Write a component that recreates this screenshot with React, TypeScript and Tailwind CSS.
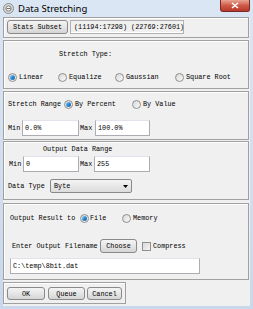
import React from "react";

const Radio = ({ on }: { on?: boolean }) => (
  <span className="relative inline-flex h-[9px] w-[9px] shrink-0 items-center justify-center rounded-full border border-[#8e8f8f] bg-gradient-to-br from-[#d8d8d8] to-[#fafafa]">
    {on && <span className="h-[5px] w-[5px] rounded-full bg-gradient-to-br from-[#8fd1f7] via-[#2a8ad4] to-[#1a5a9a]" />}
  </span>
);

const Input = ({ w, h = 16, text }: { w: number; h?: number; text: string }) => (
  <div
    className="flex shrink-0 items-center border border-[#abadb3] border-t-[#e2e3ea] bg-white pl-[2px] text-black"
    style={{ width: w, height: h }}
  >
    {text}
  </div>
);

const Btn = ({ w, h, text }: { w: number; h: number; text: string }) => (
  <div
    className="flex shrink-0 items-center justify-center rounded-[3px] border border-[#8a8a8a] bg-gradient-to-b from-[#f4f4f4] via-[#e6e6e6] to-[#d4d4d4] text-black"
    style={{ width: w, height: h }}
  >
    {text}
  </div>
);

const Box = ({ children, h, w = 246, mt }: { children: React.ReactNode; h: number; w?: number; mt: number }) => (
  <div
    className="flex shrink-0 flex-col border border-[#a0a0a0] shadow-[inset_1px_1px_0_#ffffff]"
    style={{ height: h, width: w, marginTop: mt }}
  >
    {children}
  </div>
);

export default function App() {
  return (
    <div className="flex h-[309px] w-[253px] flex-col bg-gradient-to-b from-[#dbe6f4] to-[#c9d8ec]">
      <div className="relative flex h-[17px] shrink-0 items-center">
        <svg className="ml-[3px]" width="11" height="11" viewBox="0 0 11 11">
          <circle cx="5.5" cy="5.5" r="5" fill="#d8d8d8" stroke="#7a7a7a" strokeWidth="0.8" />
          <circle cx="5.5" cy="5.5" r="2.6" fill="#f2f2f2" stroke="#6a6a6a" strokeWidth="0.8" />
          <path d="M3.5 5.5 L7.5 5.5" stroke="#555" strokeWidth="0.8" />
        </svg>
        <span className="ml-[4px] font-['Noto_Sans',sans-serif] text-[9.5px] leading-none text-black">Data Stretching</span>
        <div className="absolute right-[3px] top-0 flex h-[12px] w-[30px] items-center justify-center rounded-b-[3px] border border-t-0 border-[#7a2a24] bg-gradient-to-b from-[#e8a593] via-[#cf5a48] to-[#b8382a]">
          <svg width="8" height="7" viewBox="0 0 8 7">
            <path d="M1 1 L7 6 M7 1 L1 6" stroke="#ffffff" strokeWidth="1.6" />
          </svg>
        </div>
      </div>
      <div className="mx-[3px] flex h-[289px] flex-col whitespace-nowrap bg-[#f0f0f0] font-['Liberation_Mono',monospace] text-[6.8px] leading-[10px] text-black">
        <Box h={21} mt={0}>
          <div className="mt-[2px] flex items-center pl-[3px]">
            <Btn w={61} h={14} text="Stats Subset" />
            <div className="ml-[2px] flex h-[14px] w-[114px] shrink-0 items-center border border-[#b0b0b0] pl-[3px] shadow-[inset_-1px_-1px_0_#ffffff]">
              (11194:17298) (22769:27601)
            </div>
          </div>
        </Box>
        <Box h={49} mt={2}>
          <div className="mt-[8px] pl-[55px]">Stretch Type:</div>
          <div className="mt-[13px] flex items-center pl-[4px]">
            <div className="flex w-[50px] shrink-0 items-center gap-[2px]"><Radio on />Linear</div>
            <div className="flex w-[57px] shrink-0 items-center gap-[2px]"><Radio />Equalize</div>
            <div className="flex w-[60px] shrink-0 items-center gap-[2px]"><Radio />Gaussian</div>
            <div className="flex items-center gap-[2px]"><Radio />Square Root</div>
          </div>
        </Box>
        <Box h={49} mt={2}>
          <div className="mt-[7px] flex items-center pl-[4px]">
            <span className="w-[56px] shrink-0">Stretch Range</span>
            <div className="flex w-[68px] shrink-0 items-center gap-[2px]"><Radio on />By Percent</div>
            <div className="flex items-center gap-[2px]"><Radio />By Value</div>
          </div>
          <div className="mt-[11px] flex items-center pl-[4px]">
            <span className="w-[14px] shrink-0">Min</span>
            <Input w={57} text="0.0%" />
            <span className="ml-[1px] w-[15px] shrink-0">Max</span>
            <Input w={55} text="100.0%" />
          </div>
        </Box>
        <Box h={59} mt={1}>
          <div className="mt-[2px] pl-[39px]">Output Data Range</div>
          <div className="mt-[2px] flex items-center pl-[5px]">
            <span className="w-[14px] shrink-0">Min</span>
            <Input w={56} text="0" />
            <span className="ml-[1px] w-[14px] shrink-0">Max</span>
            <Input w={56} text="255" />
          </div>
          <div className="mt-[7px] flex items-center pl-[4px]">
            <span className="w-[42px] shrink-0">Data Type</span>
            <div className="flex h-[14px] w-[82px] shrink-0 items-center justify-between rounded-[2px] border border-[#8a8a8a] bg-gradient-to-b from-[#f4f4f4] to-[#dcdcdc] pl-[3px] pr-[3px]">
              <span>Byte</span>
              <svg width="5" height="3" viewBox="0 0 5 3"><path d="M0 0 L5 0 L2.5 3 Z" fill="#000" /></svg>
            </div>
          </div>
        </Box>
        <Box h={77} mt={3}>
          <div className="mt-[9px] flex items-center pl-[6px]">
            <span className="w-[70px] shrink-0">Output Result to</span>
            <div className="flex w-[42px] shrink-0 items-center gap-[1px]"><Radio on />File</div>
            <div className="flex items-center gap-[2px]"><Radio />Memory</div>
          </div>
          <div className="mt-[16px] flex items-center pl-[8px]">
            <span className="w-[88px] shrink-0">Enter Output Filename</span>
            <Btn w={37} h={14} text="Choose" />
            <span className="ml-[5px] h-[9px] w-[9px] shrink-0 border border-[#8e8f8f] bg-gradient-to-br from-[#d8d8d8] to-[#f6f6f6]" />
            <span className="ml-[2px]">Compress</span>
          </div>
          <div className="mt-[5px] pl-[6px]">
            <Input w={190} text="C:\temp\8bit.dat" />
          </div>
        </Box>
        <Box h={22} w={123} mt={2}>
          <div className="mt-[4px] flex items-center pl-[3px]">
            <Btn w={38} h={13} text="OK" />
            <div className="ml-[3px]"><Btn w={37} h={13} text="Queue" /></div>
            <div className="ml-[2px]"><Btn w={35} h={13} text="Cancel" /></div>
          </div>
        </Box>
      </div>
    </div>
  );
}
